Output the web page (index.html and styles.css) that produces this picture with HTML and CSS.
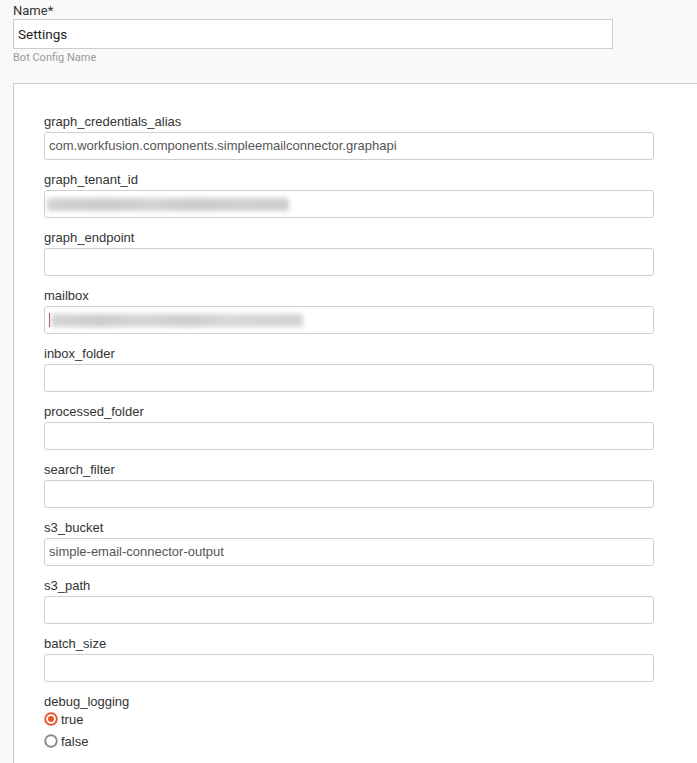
FILE: index.html
```html
<!DOCTYPE html>
<html>
<head>
<meta charset="utf-8">
<link rel="stylesheet" href="styles.css">
</head>
<body>
  <div class="name-block">
    <label class="name-label">Name*</label>
    <div class="name-input">Settings</div>
    <div class="hint">Bot Config Name</div>
  </div>

  <div class="panel">
    <div class="field">
      <label>graph_credentials_alias</label>
      <div class="input">com.workfusion.components.simpleemailconnector.graphapi</div>
    </div>
    <div class="field">
      <label>graph_tenant_id</label>
      <div class="input"><span class="masked tenant"></span></div>
    </div>
    <div class="field">
      <label>graph_endpoint</label>
      <div class="input"></div>
    </div>
    <div class="field">
      <label>mailbox</label>
      <div class="input"><span class="caret"></span><span class="masked mail"></span></div>
    </div>
    <div class="field">
      <label>inbox_folder</label>
      <div class="input"></div>
    </div>
    <div class="field">
      <label>processed_folder</label>
      <div class="input"></div>
    </div>
    <div class="field">
      <label>search_filter</label>
      <div class="input"></div>
    </div>
    <div class="field">
      <label>s3_bucket</label>
      <div class="input">simple-email-connector-output</div>
    </div>
    <div class="field">
      <label>s3_path</label>
      <div class="input"></div>
    </div>
    <div class="field">
      <label>batch_size</label>
      <div class="input"></div>
    </div>
    <div class="field radio-field">
      <label>debug_logging</label>
      <div class="radio-row">
        <svg class="radio" width="14" height="14" viewBox="0 0 14 14"><circle cx="7" cy="7" r="5.8" fill="#fff" stroke="#e8542a" stroke-width="1.9"/><circle cx="7" cy="7" r="3" fill="#e8542a"/></svg>
        <span>true</span>
      </div>
      <div class="radio-row">
        <svg class="radio" width="14" height="14" viewBox="0 0 14 14"><circle cx="7" cy="7" r="5.8" fill="#fff" stroke="#8a8a96" stroke-width="1.9"/></svg>
        <span>false</span>
      </div>
    </div>
  </div>
</body>
</html>
```
FILE: styles.css
```css
html, body {
  margin: 0;
  padding: 0;
  background: #f9f9f9;
  overflow: hidden;
}

.name-block {
  padding: 2px 0 0 13px;
  font-family: Roboto, "Liberation Sans", sans-serif;
}

.name-label {
  display: block;
  font-size: 13px;
  line-height: 17px;
  color: #333;
}

.name-input {
  box-sizing: border-box;
  width: 600px;
  height: 30px;
  border: 1px solid #cccccc;
  background: #fff;
  padding: 0 4px;
  font-size: 13.5px;
  line-height: 28px;
  color: #222;
}

.hint {
  font-size: 11px;
  line-height: 16px;
  margin-top: 1px;
  color: #9a9a9a;
}

/* white settings sheet, open on the right and bottom */
.panel {
  box-sizing: border-box;
  margin: 17px 0 0 13px;
  width: calc(100% - 13px);
  height: 680px;
  overflow: hidden;
  background: #fff;
  border-top: 1px solid #cccccc;
  border-left: 1px solid #cccccc;
  padding: 30px 0 0 30px;
  font-family: "Liberation Sans", Arial, sans-serif;
}

.field {
  margin-bottom: 12px;
}

.field label {
  display: block;
  font-size: 13px;
  line-height: 15px;
  color: #333;
  margin-bottom: 3px;
}

.input {
  box-sizing: border-box;
  width: 610px;
  height: 28px;
  border: 1px solid #cfcfcf;
  border-radius: 3px;
  padding: 0 4px;
  font-size: 13px;
  line-height: 26px;
  color: #555;
  display: flex;
  align-items: center;
}

/* hidden values shown as a soft smudge */
.masked {
  display: block;
  height: 13px;
  filter: blur(2.4px);
  border-radius: 2px;
}

.tenant {
  width: 242px;
  margin-left: -2px;
  background: linear-gradient(90deg, #d2d2d2 0%, #cbcbcb 25%, #d4d4d4 45%, #cacaca 60%, #d1d1d1 80%, #cdcdcd 100%);
}

.caret {
  display: block;
  width: 1px;
  height: 14px;
  background: #8c3b3b;
  margin-right: 1px;
}

.mail {
  width: 252px;
  background: linear-gradient(90deg, #d5d5d5 0%, #cccccc 20%, #d6d6d6 35%, #cdcdcd 55%, #d8d8d8 70%, #d2d2d2 100%);
}

.radio-field label {
  margin-bottom: -1px;
}

.radio-row {
  display: flex;
  align-items: center;
  height: 22px;
  font-size: 13px;
  color: #333;
}

.radio {
  display: block;
  margin-right: 3px;
}
```
